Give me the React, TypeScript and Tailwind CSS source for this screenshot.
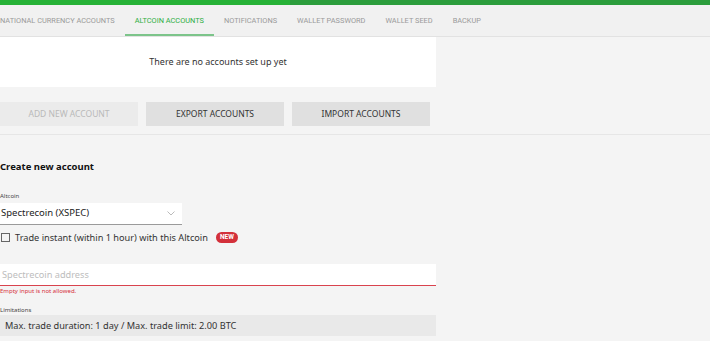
const tabs = [
  "NATIONAL CURRENCY ACCOUNTS",
  "ALTCOIN ACCOUNTS",
  "NOTIFICATIONS",
  "WALLET PASSWORD",
  "WALLET SEED",
  "BACKUP",
];

function Tabs() {
  return (
    <div className="h-[32px] bg-[#f1f1f1] border-b border-[#e2e2e2] flex overflow-hidden">
      <div className="flex ml-[-10px]">
        {tabs.map((t) => {
          const active = t === "ALTCOIN ACCOUNTS";
          return (
            <div
              key={t}
              className={
                active
                  ? "px-[10px] pt-[3px] flex items-center text-[7.4px] text-[#2fae43] border-b-2 border-[#7cc48a] whitespace-nowrap font-['Roboto',sans-serif]"
                  : "px-[10px] pt-[3px] flex items-center text-[7.4px] text-[#9a9a9a] border-b-2 border-transparent whitespace-nowrap font-['Roboto',sans-serif]"
              }
            >
              {t}
            </div>
          );
        })}
      </div>
    </div>
  );
}

function NewBadge() {
  return (
    <span className="ml-[8px] inline-flex items-center h-[11px] px-[4px] rounded-full bg-[#d3303a] text-white text-[6.5px] font-bold font-['Roboto',sans-serif]">
      NEW
    </span>
  );
}

export default function App() {
  return (
    <div className="w-[710px] h-[341px] bg-[#f4f4f4] overflow-hidden font-['Noto_Sans',sans-serif] text-[#333]">
      <div className="h-[5px] flex">
        <div className="w-[290px] bg-[#27b237]" />
        <div className="flex-1 bg-[#2c9d3c]" />
      </div>
      <Tabs />
      <div className="w-[436px] h-[50px] bg-white flex items-center justify-center text-[9px] text-[#333]">
        There are no accounts set up yet
      </div>
      <div className="flex gap-[8px] mt-[15px]">
        <div className="w-[138px] h-[24px] bg-[#ebebeb] flex items-center justify-center text-[8.5px] text-[#b9b9b9]">
          ADD NEW ACCOUNT
        </div>
        <div className="w-[138px] h-[24px] bg-[#e0e0e0] flex items-center justify-center text-[8.5px] text-[#333]">
          EXPORT ACCOUNTS
        </div>
        <div className="w-[138px] h-[24px] bg-[#e0e0e0] flex items-center justify-center text-[8.5px] text-[#333]">
          IMPORT ACCOUNTS
        </div>
      </div>
      <div className="mt-[8px] border-t border-[#e6e6e6]" />
      <div className="pt-[25px]">
        <div className="text-[9.5px] leading-[13px] font-bold text-[#111]">Create new account</div>
        <div className="mt-[19px] text-[6px] leading-[8px] text-[#444]">Altcoin</div>
        <div className="mt-[3px] w-[182px] h-[22px] bg-white border-b border-[#9a9a9a] flex items-center justify-between pl-[1px] pr-[7px]">
          <span className="text-[9.5px] text-[#222]">Spectrecoin (XSPEC)</span>
          <svg width="8" height="5" viewBox="0 0 8 5" fill="none">
            <path d="M0.5 0.5 L4 4 L7.5 0.5" stroke="#aaa" strokeWidth="0.8" />
          </svg>
        </div>
        <div className="mt-[7px] flex items-center h-[11px]">
          <div className="w-[9px] h-[9px] border border-[#666] ml-[1px]" />
          <span className="ml-[5px] text-[9.2px] text-[#333]">
            Trade instant (within 1 hour) with this Altcoin
          </span>
          <NewBadge />
        </div>
        <div className="mt-[21px] w-[436px] h-[22px] bg-white border-b border-[#d9434e] flex items-center pl-[2px] text-[9.2px] text-[#bdbdbd]">
          Spectrecoin address
        </div>
        <div className="mt-[1px] text-[6px] leading-[8px] text-[#d62f3b]">Empty input is not allowed.</div>
        <div className="mt-[11px] text-[6px] leading-[8px] text-[#444]">Limitations</div>
        <div className="mt-[1px] w-[436px] h-[21px] bg-[#e9e9e9] flex items-center pl-[5px] text-[9.2px] text-[#333]">
          Max. trade duration: 1 day / Max. trade limit: 2.00 BTC
        </div>
      </div>
    </div>
  );
}
